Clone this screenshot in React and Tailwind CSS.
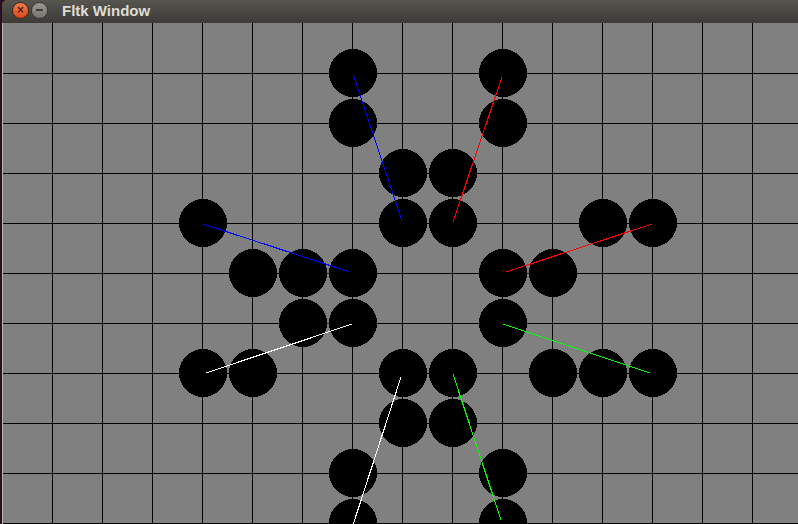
import React from "react";

const stones = [
  [7, 1], [7, 2], [10, 1], [10, 2],
  [8, 3], [9, 3], [8, 4], [9, 4],
  [4, 4], [5, 5], [6, 5], [7, 5], [6, 6], [7, 6],
  [4, 7], [5, 7], [8, 7], [9, 7], [8, 8], [9, 8],
  [7, 9], [7, 10], [10, 9], [10, 10],
  [12, 4], [13, 4], [10, 5], [11, 5], [10, 6],
  [11, 7], [12, 7], [13, 7],
];

const lines = [
  ["#0000ff", 353, 74, 402, 221],
  ["#ff0000", 502, 77, 453, 222],
  ["#0000ff", 203, 224, 350, 272],
  ["#ffffff", 206, 373, 352, 324],
  ["#ff0000", 506, 272, 652, 224],
  ["#00ff00", 503, 324, 650, 373],
  ["#ffffff", 401, 377, 353, 525],
  ["#00ff00", 453, 374, 501, 520],
];

function Board() {
  const vs = [];
  for (let x = 52; x <= 798; x += 50) vs.push(x);
  const hs = [];
  for (let y = 73; y <= 524; y += 50) hs.push(y);
  return (
    <svg width="795" height="501" className="block">
      <g transform="translate(-3,-23)">
        <rect x="3" y="23" width="795" height="501" fill="#808080" />
        {vs.map((x) => (
          <line key={"v" + x} x1={x + 0.5} y1="23" x2={x + 0.5} y2="524" stroke="#000" strokeWidth="1" shapeRendering="crispEdges" />
        ))}
        {hs.map((y) => (
          <line key={"h" + y} x1="3" y1={y + 0.5} x2="798" y2={y + 0.5} stroke="#000" strokeWidth="1" shapeRendering="crispEdges" />
        ))}
        {stones.map(([c, r]) => (
          <circle key={c + "-" + r} cx={2 + c * 50 + 1} cy={23 + r * 50} r="24" fill="#000" shapeRendering="crispEdges" />
        ))}
        {lines.map(([col, x1, y1, x2, y2], i) => (
          <line key={i} x1={x1} y1={y1} x2={x2} y2={y2} stroke={col} strokeWidth="1.1" shapeRendering="crispEdges" />
        ))}
      </g>
    </svg>
  );
}

export default function App() {
  return (
    <div className="w-[798px] h-[524px] overflow-hidden flex bg-[#2c0e22]">
      <div className="w-[2px] shrink-0 bg-[#2c0e22]" />
      <div className="flex-1 flex flex-col">
        <div className="h-[23px] shrink-0 flex items-center pb-[3px] rounded-tl-[5px] bg-gradient-to-b from-[#57554f] to-[#3c3b37]">
          <div className="ml-[10px] w-[17px] h-[17px] rounded-full bg-gradient-to-b from-[#f47a4a] to-[#d9461a] border border-[#3a2a20] flex items-center justify-center">
            <span className="text-[10px] leading-none text-[#3b1a0e] font-bold" style={{ fontFamily: "'DejaVu Sans', sans-serif" }}>×</span>
          </div>
          <div className="ml-[2px] w-[17px] h-[17px] rounded-full bg-gradient-to-b from-[#9a9993] to-[#75746f] border border-[#3a3935] flex items-center justify-center">
            <div className="w-[7px] h-[2px] bg-[#3c3b37]" />
          </div>
          <span
            className="ml-[14px] text-[15px] font-bold text-[#dfdbd2] leading-none"
            style={{ fontFamily: "'Liberation Sans', sans-serif" }}
          >
            Fltk Window
          </span>
        </div>
        <div className="flex-1 flex">
          <div className="w-px shrink-0 bg-[#b8b6b0]" />
          <Board />
        </div>
      </div>
    </div>
  );
}
